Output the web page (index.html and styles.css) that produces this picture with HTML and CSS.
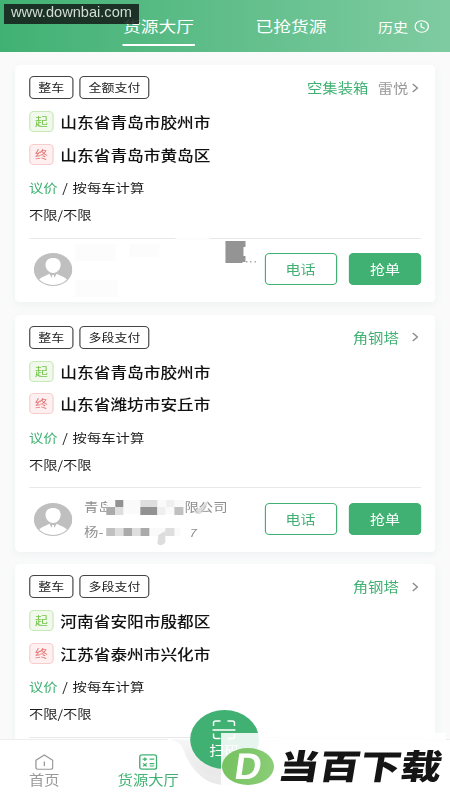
FILE: index.html
```html
<!DOCTYPE html>
<html lang="zh-CN">
<head>
<meta charset="utf-8">
<title>货源大厅</title>
<link rel="stylesheet" href="styles.css">
</head>
<body>
<svg width="0" height="0" class="defs">
  <symbol id="avatar" viewBox="0 0 33 33">
    <circle cx="16.5" cy="16.5" r="16.5" fill="#bfbfbf"/>
    <path d="M16.500 5c4 0 6.500 2.700 6.500 6.500 0 4-2.500 8.500-6.500 8.500s-6.500-4.500-6.500-8.500C10 7.700 12.500 5 16.500 5z" fill="#fff"/>
    <path d="M4.600 26.500c1.500-2.500 5.500-3.500 8.700-5.800l2.200 4.300.3-3h1.400l.3 3 2.200-4.300c3.200 2.300 7.200 3.300 8.700 5.800a15.500 15.500 0 0 1-23.800 0z" fill="#fff"/>
  </symbol>
  <symbol id="chev" viewBox="0 0 6 10"><path d="M.8 1l4 4-4 4" fill="none" stroke="#8c8c8c" stroke-width="1.200"/></symbol>
</svg>
<div class="app">
  <header class="top">
    <div class="tab active">货源大厅</div>
    <div class="tab second">已抢货源</div>
    <div class="history">历史
      <svg width="13" height="13" viewBox="0 0 13 13" fill="none" stroke="#fff" stroke-width="1.100"><circle cx="6.500" cy="6.500" r="5.700"/><path d="M6 3v4l3 1.500"/></svg>
    </div>
  </header>
  <main class="list">
    <section class="card">
      <div class="head"><span class="tag">整车</span><span class="tag wide">全额支付</span><span class="goods">空集装箱</span><span class="owner">雷悦</span><svg class="chev"><use href="#chev"/></svg></div>
      <div class="place"><span class="badge from">起</span>山东省青岛市胶州市</div>
      <div class="place"><span class="badge to">终</span>山东省青岛市黄岛区</div>
      <div class="price"><em>议价</em> / 按每车计算</div>
      <div class="limit">不限/不限</div>
      <div class="foot">
        <svg class="avatar"><use href="#avatar"/></svg>
        <div class="company"></div>
        <button class="btn">电话</button><button class="btn fill">抢单</button>
        <svg class="mosaic" viewBox="0 0 233 62" preserveAspectRatio="none"><path d="M46 5h41v17H46zM100 5h30v13h-30zM46 41h42v17H46z" fill="#fcfcfc"/><path d="M196 2h20v6h-2v9h2v6h-3v1h-17z" fill="#949494"/><path d="M216.500 22h1.500v1.500h-1.500zM220.500 22h1.500v1.500h-1.500zM225 22h1.500v1.500H225z" fill="#aaa"/><path d="M146-1h34v2h-34z" fill="#fcfcfc"/></svg>
      </div>
    </section>
    <section class="card">
      <div class="head"><span class="tag">整车</span><span class="tag wide">多段支付</span><span class="goods solo">角钢塔</span><svg class="chev"><use href="#chev"/></svg></div>
      <div class="place"><span class="badge from">起</span>山东省青岛市胶州市</div>
      <div class="place"><span class="badge to">终</span>山东省潍坊市安丘市</div>
      <div class="price"><em>议价</em> / 按每车计算</div>
      <div class="limit">不限/不限</div>
      <div class="foot">
        <svg class="avatar"><use href="#avatar"/></svg>
        <div class="company"><p>青岛<span class="rest">限公司</span></p><p>杨-<span class="digit">7</span></p></div>
        <button class="btn">电话</button><button class="btn fill">抢单</button>
        <svg class="mosaic" viewBox="0 0 233 62" preserveAspectRatio="none">
          <path d="M78 12h77v14H78zM78 40h73v8H78z" fill="#fafafa"/>
          <path d="M86 12h8v7h-8zM111 19h17v8h-17z" fill="#929292"/>
          <path d="M77 19h9v8h-9zM94 40h9v8h-9zM111 40h9v8h-9z" fill="#aaa"/>
          <path d="M145 19h9v8h-9zM77 40h9v8h-9z" fill="#c0c0c0"/>
          <path d="M86 19h8v8h-8zM111 12h17v7h-17zM86 40h8v8h-8zM103 40h8v8h-8zM136 40h9v8h-9z" fill="#dedede"/>
          <path d="M128 19h8v8h-8zM137 12h8v7h-8z" fill="#efefef"/>
          <path d="M129 47l7-4v11c-2 4-7 4-8 1zM165 24l14-12-3 9c-4 6-9 6-11 3z" fill="#d2d2d2" opacity=".75"/>
        </svg>
      </div>
    </section>
    <section class="card">
      <div class="head"><span class="tag">整车</span><span class="tag wide">多段支付</span><span class="goods solo">角钢塔</span><svg class="chev"><use href="#chev"/></svg></div>
      <div class="place"><span class="badge from">起</span>河南省安阳市殷都区</div>
      <div class="place"><span class="badge to">终</span>江苏省泰州市兴化市</div>
      <div class="price"><em>议价</em> / 按每车计算</div>
      <div class="limit">不限/不限</div>
      <div class="foot"></div>
    </section>
  </main>
  <nav class="nav">
    <svg class="navbg" viewBox="0 0 450 70" preserveAspectRatio="none">
      <defs><linearGradient id="ng" x1="0" y1="0" x2="0" y2="1"><stop offset="0" stop-color="#f6f6f6"/><stop offset="1" stop-color="#e4e4e4"/></linearGradient></defs>
      <path d="M172 9.500h105L262 38q-16 17-37 17t-37-17z" fill="url(#ng)"/>
      <path d="M0 10h170c11 0 14 5 17 14 6 14 19 22 38 22s32-8 38-22c3-9 6-14 17-14h170v60H0z" fill="url(#ng)"/>
      <path d="M0 10h168c11 0 14 5 17 14 6 14 19 31 40 31s34-17 40-31c3-9 6-14 17-14h168v60H0z" fill="#fff"/>
      <path d="M0 9.500h168M282 9.500h168" fill="none" stroke="#ededed"/>
    </svg>
    <div class="item home">
      <svg width="16" height="16" viewBox="0 0 16 16" fill="none" stroke="#999" stroke-width="1.100"><path d="M.8 6.300L8 1l7.200 5.300v7.200q0 1.700-1.700 1.700h-11q-1.700 0-1.700-1.700zM8 7.500V12"/></svg>
      首页</div>
    <div class="item hall">
      <svg width="16" height="16" viewBox="0 0 16 16" fill="none" stroke="#41b173" stroke-width="1.200"><rect x=".8" y=".8" width="14.400" height="14.400" rx="2"/><path d="M3.200 5.200h4M5.200 3.400v3.600M9.200 5.200h4M9.200 9.700h4M9.200 12h4M3.700 9.300l3 3M6.700 9.300l-3 3"/></svg>
      货源大厅</div>
    <div class="scan">
      <svg width="20" height="20" viewBox="0 0 20 20" fill="none" stroke="#fff" stroke-width="1.300"><path d="M1 6V3q0-2 2-2h4M13 1h4q2 0 2 2v3M0 10h20M1 13.500v3q0 2 2 2h4M13 18.500h4q2 0 2-2v-3"/></svg>
      扫码</div>
  </nav>
</div>
<div class="site">www.downbai.com</div>
<div class="brand"><span class="disc"><b>D</b></span><span class="name">当百下载</span></div>
</body>
</html>
```

FILE: styles.css
```css
* { box-sizing: border-box; }
body { margin: 0; width: 450px; height: 800px; overflow: hidden; position: relative; background: #fafafa; font-family: "Noto Sans CJK SC", sans-serif; }
.defs { position: absolute; }
/* The app is laid out on a narrower canvas and widened to fill the window. */
.app { position: relative; width: 385.7px; height: 800px; overflow: hidden; transform: scaleX(1.1667); transform-origin: 0 0; color: #1c1c1c; }
p { margin: 0; }
em { font-style: normal; color: #41b173; }
.top { height: 52px; padding-left: 104.500px; display: flex; background: linear-gradient(90deg, #41b173, #7fcba1); color: #fff; font-size: 15.200px; line-height: 51px; }
.tab { width: 62.600px; text-align: center; height: 46px; white-space: nowrap; }
.tab.active { border-bottom: 2px solid #fff; }
.second { margin-left: 51px; }
.history { margin-left: 43.300px; font-size: 12.800px; display: flex; align-items: center; gap: 5px; padding-top: 1px; }
.list { padding: 13px 12.860px 0; display: flex; flex-direction: column; gap: 12.700px; }
.card { height: 237px; flex: none; padding: 11px 12px 0; background: #fff; border-radius: 4px; box-shadow: 0 3px 8px #eef3f3; }
.head { height: 23px; display: flex; align-items: center; }
.tag { width: 38px; height: 23px; border: 1px solid #444; border-radius: 4px; font-size: 11.100px; line-height: 21px; text-align: center; }
.wide { width: 60.500px; margin-left: 5px; }
.goods { margin-left: auto; color: #41b173; font-size: 13.200px; line-height: 23px; }
.owner { margin-left: 8px; color: #999; font-size: 13px; line-height: 23px; }
.chev { width: 6px; height: 10px; margin: 0 2px 0 3px; }
.solo { margin-right: 8px; }
.place { height: 21px; margin-top: 12px; display: flex; align-items: center; gap: 5.700px; font-size: 14.300px; font-weight: 500; line-height: 19px; color: #111; }
.place + .place { margin-top: 11.500px; }
.badge { width: 21.200px; height: 21px; border: 1px solid; border-radius: 4px; font-size: 11px; font-weight: 400; line-height: 19px; text-align: center; }
.from { color: #75c44c; background: #f0f9eb; border-color: #c9e8b8; }
.to { color: #e57373; background: #fef0f0; border-color: #f6cdcd; }
.price, .limit { font-size: 12.200px; line-height: 20px; }
.price { margin-top: 13.500px; font-size: 12.300px; word-spacing: 1.200px; }
.limit { margin-top: 7px; }
.foot { position: relative; height: 62px; margin-top: 12.500px; border-top: 1px solid #e8e8e8; display: flex; padding: 14.500px 0 0 4px; }
.avatar { width: 33px; height: 33px; flex: none; }
.company { width: 165px; padding-left: 10.200px; margin-top: -8px; font-size: 12.300px; color: #8e8e8e; line-height: 25px; white-space: nowrap; }
.rest { margin-left: 61.500px; }
.digit { margin-left: 73px; font-style: italic; font-size: 11px; }
.btn { width: 61.800px; height: 32px; padding: 0; flex: none; border: 1px solid #41b173; border-radius: 4px; background: #fff; color: #41b173; font: 12.900px/30px "Noto Sans CJK SC", sans-serif; }
.fill { margin-left: 10.500px; background: #41b173; color: #fff; }
.mosaic { position: absolute; left: 0; top: 0; width: 200px; height: 62px; overflow: visible; }
.nav { position: absolute; left: 0; bottom: 0; width: 100%; height: 60px; }
.navbg { position: absolute; left: 0; top: -10px; width: 100%; height: 70px; }
.item { position: absolute; top: 14px; width: 60px; display: flex; flex-direction: column; align-items: center; font-size: 13.100px; line-height: 20px; white-space: nowrap; }
.home { left: 8px; color: #999; }
.hall { left: 97px; color: #41b173; }
.scan { position: absolute; left: 162.800px; top: -30px; width: 59.200px; height: 59.200px; border-radius: 50%; background: #41b173; color: #fff; display: flex; flex-direction: column; align-items: center; padding-top: 10px; font-size: 13px; line-height: 20px; }
.site { position: absolute; left: 4px; top: 4px; width: 135px; height: 20px; background: rgba(20, 28, 24, .86); color: #d3ddd6; font: 14.600px/16px "Liberation Sans", sans-serif; text-align: center; }
.brand { position: absolute; left: 221px; top: 733px; width: 225px; height: 67px; background: rgba(255, 255, 255, .87); }
.disc { position: absolute; left: 1px; top: 15px; width: 52px; height: 37px; border-radius: 50%; background: linear-gradient(100deg, #75c15f, #8bce78); color: #fff; text-align: center; font: 37px/38px "Liberation Sans", sans-serif; }
.disc b { display: inline-block; transform: skewX(-8deg); }
.name { position: absolute; left: 58px; top: 12px; font-size: 34px; line-height: 40px; font-weight: 900; color: #151515; white-space: nowrap; transform: scaleX(1.200) skewX(-8deg); transform-origin: 0 50%; }
```
